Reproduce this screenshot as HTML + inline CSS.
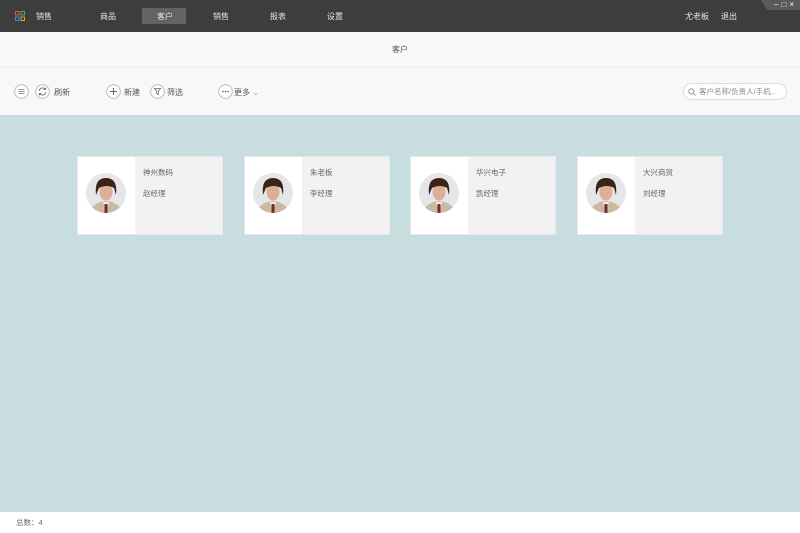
<!DOCTYPE html>
<html><head><meta charset="utf-8"><style>
*{margin:0;padding:0;box-sizing:border-box}
body{width:800px;height:533px;overflow:hidden;font-family:"Liberation Sans","Noto Sans CJK SC",sans-serif;font-size:8px;color:#555;background:#c8dde0;position:relative}
.top{position:absolute;left:0;top:0;width:800px;height:32px;background:#3d3d3d;color:#e8e8e8}
.top span{position:absolute;top:11px;font-size:8px}
.act{position:absolute;left:142px;top:8px;width:44px;height:16px;background:#636363}
.win{position:absolute;right:0;top:0;width:45px;height:10px;background:#5a5a5a;clip-path:polygon(6px 0,100% 0,100% 100%,12px 100%);color:#fff;font-size:8px;line-height:9px;text-align:right;padding-right:3px;letter-spacing:3px}
.hdr{position:absolute;left:0;top:32px;width:800px;height:36px;background:#f8f8fa;border-bottom:2px solid #f1f1f4;text-align:center;line-height:35px}
.tb{position:absolute;left:0;top:68px;width:800px;height:47px;background:#f8f8fa}
.ic{position:absolute;top:84px;width:15px;height:15px}
.tl{position:absolute;top:87px;font-size:8px;color:#555}
.search{position:absolute;left:683px;top:83px;width:104px;height:17px;border:1px solid #ddd;border-radius:9px;background:#fff;font-size:7.5px;color:#888;line-height:15px;padding-left:15px}
.card{position:absolute;top:156px;width:146px;height:79px;background:#f2f2f2;border:1px solid #e4eaec}
.card .l{position:absolute;left:0;top:0;width:57px;height:77px;background:#fff}
.card svg{position:absolute;left:8px;top:16px}
.card .n{position:absolute;left:65px;top:10px;font-size:7.5px;color:#666}
.card .m{position:absolute;left:65px;top:31px;font-size:7.5px;color:#666}
.foot{position:absolute;left:0;top:512px;width:800px;height:21px;background:#fff;font-size:7.5px;color:#666;padding:5px 0 0 16px}
</style></head><body>
<div class="top">
<svg style="position:absolute;left:15px;top:11px" width="10" height="10"><rect x="0.5" y="0.5" width="3.5" height="3.5" fill="none" stroke="#e05a3a"/><rect x="6" y="0.5" width="3.5" height="3.5" fill="none" stroke="#4caf50"/><rect x="0.5" y="6" width="3.5" height="3.5" fill="none" stroke="#3a8fe0"/><rect x="6" y="6" width="3.5" height="3.5" fill="none" stroke="#e0a030"/></svg>
<span style="left:36px">销售</span>
<span style="left:100px">商品</span>
<div class="act"></div><span style="left:157px">客户</span>
<span style="left:213px">销售</span>
<span style="left:270px">报表</span>
<span style="left:327px">设置</span>
<span style="left:685px">尤老板</span>
<span style="left:721px">退出</span>
<div class="win">‒□×</div>
</div>
<div class="hdr">客户</div>
<div class="tb"></div>
<svg class="ic" style="left:14px" viewBox="0 0 15 15"><circle cx="7.5" cy="7.5" r="6.8" fill="#fff" stroke="#bbb"/><path d="M4.5 5.5h6M4.5 7.5h6M4.5 9.5h6" stroke="#777" stroke-width="0.8"/></svg>
<svg class="ic" style="left:35px" viewBox="0 0 15 15"><circle cx="7.5" cy="7.5" r="6.8" fill="#fff" stroke="#bbb"/><path d="M4.2 7a3.4 3.4 0 0 1 6-1.8M10.8 8a3.4 3.4 0 0 1-6 1.8" fill="none" stroke="#666" stroke-width="0.9"/><path d="M10.6 3.6v2h-2M4.4 11.4v-2h2" fill="none" stroke="#666" stroke-width="0.9"/></svg><div class="tl" style="left:54px">刷新</div>
<svg class="ic" style="left:106px" viewBox="0 0 15 15"><circle cx="7.5" cy="7.5" r="6.8" fill="#fff" stroke="#bbb"/><path d="M7.5 4v7M4 7.5h7" stroke="#666" stroke-width="1"/></svg><div class="tl" style="left:124px">新建</div>
<svg class="ic" style="left:150px" viewBox="0 0 15 15"><circle cx="7.5" cy="7.5" r="6.8" fill="#fff" stroke="#bbb"/><path d="M4.5 4.5h6l-2.3 3v3l-1.4-.8v-2.2z" fill="none" stroke="#666" stroke-width="0.8"/></svg><div class="tl" style="left:167px">筛选</div>
<svg class="ic" style="left:218px" viewBox="0 0 15 15"><circle cx="7.5" cy="7.5" r="6.8" fill="#fff" stroke="#bbb"/><circle cx="5" cy="7.5" r=".8" fill="#555"/><circle cx="7.5" cy="7.5" r=".8" fill="#555"/><circle cx="10" cy="7.5" r=".8" fill="#555"/></svg><div class="tl" style="left:234px">更多 <span style="color:#aaa">⌄</span></div>
<div class="search"><svg style="position:absolute;left:4px;top:4px" width="8" height="8"><circle cx="3.3" cy="3.3" r="2.6" fill="none" stroke="#999"/><line x1="5.2" y1="5.2" x2="7.5" y2="7.5" stroke="#999"/></svg>客户名称/负责人/手机...</div>

<svg width="0" height="0" style="position:absolute"><defs><clipPath id="c"><circle cx="20" cy="20" r="20"/></clipPath><g id="av"><g clip-path="url(#c)"><rect width="40" height="40" fill="#e6e6e8"/><path d="M3 40 Q7 29 20 28 Q33 29 37 40Z" fill="#c9b9a2"/><path d="M17 29 L20 40 L23 29Z" fill="#f2efe8"/><rect x="18.5" y="31" width="3" height="9" fill="#7a2a2a"/><ellipse cx="20" cy="19" rx="6.5" ry="8.5" fill="#deaf98"/><path d="M10 22 Q8 5 20 5 Q32 5 30 22 L28 15 Q21 11 13 15Z" fill="#3a2418"/></g></g></defs></svg>

<div class="card" style="left:77px"><div class="l"></div><svg width="40" height="40"><use href="#av"/></svg><div class="n">神州数码</div><div class="m">赵经理</div></div>
<div class="card" style="left:244px"><div class="l"></div><svg width="40" height="40"><use href="#av"/></svg><div class="n">朱老板</div><div class="m">李经理</div></div>
<div class="card" style="left:410px"><div class="l"></div><svg width="40" height="40"><use href="#av"/></svg><div class="n">华兴电子</div><div class="m">凯经理</div></div>
<div class="card" style="left:577px"><div class="l"></div><svg width="40" height="40"><use href="#av"/></svg><div class="n">大兴商贸</div><div class="m">刘经理</div></div>

<div class="foot">总数：4</div>
</body></html>
